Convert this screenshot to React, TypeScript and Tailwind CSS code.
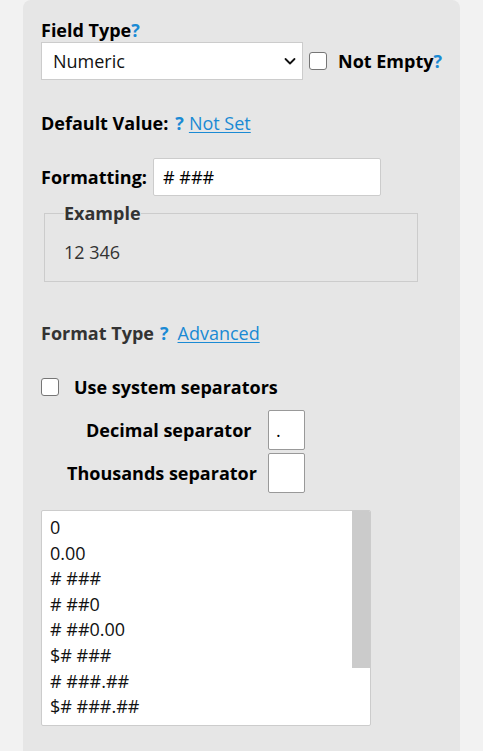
import React from "react";

function Help({ className = "" }: { className?: string }) {
  return (
    <span className={`font-bold text-[#1a8ad4] cursor-help ${className}`}>?</span>
  );
}

const formats = [
  "0",
  "0.00",
  "# ###",
  "# ##0",
  "# ##0.00",
  "$# ###",
  "# ###.##",
  "$# ###.##",
];

export default function App() {
  return (
    <div className="min-h-[751px] bg-[#f2f2f2] font-['Open_Sans',sans-serif] text-[18px] leading-[22px] text-black">
      <div className="ml-[23px] w-[437px] min-h-[751px] rounded-t-[8px] bg-[#e6e6e6] pl-[18px] pt-[19px] pb-[26px]">
        {/* field type */}
        <div className="font-bold">
          Field Type<Help />
        </div>
        <div className="mt-[1px] flex items-center">
          <div className="relative w-[262px]">
            <select
              defaultValue="Numeric"
              className="h-[38px] w-full appearance-none border border-[#ccc] bg-white pl-[11px] text-[18px] text-[#111] outline-none"
            >
              <option>Numeric</option>
              <option>Text</option>
              <option>Date</option>
            </select>
            <svg
              className="pointer-events-none absolute right-[7px] top-[13px]"
              width="12"
              height="12"
              viewBox="0 0 12 12"
              fill="none"
              stroke="#111"
              strokeWidth="1.8"
              strokeLinecap="round"
              strokeLinejoin="round"
            >
              <path d="M1.5 4 L6 8.5 L10.5 4" />
            </svg>
          </div>
          <input
            type="checkbox"
            className="ml-[6px] h-[18px] w-[18px] appearance-none rounded-[3px] border border-[#767676] bg-white"
          />
          <span className="ml-[11px] font-bold">
            Not Empty<Help />
          </span>
        </div>

        {/* default value */}
        <div className="mt-[32px] flex items-center">
          <span className="font-bold">Default Value:</span>
          <Help className="ml-[7px]" />
          <a href="#" className="ml-[5px] text-[#1a8ad4] underline underline-offset-2">
            Not Set
          </a>
        </div>

        {/* formatting */}
        <div className="mt-[24px] flex items-center">
          <span className="font-bold">Formatting:</span>
          <input
            defaultValue="# ###"
            className="ml-[6px] h-[38px] w-[228px] rounded-[2px] border border-[#ccc] bg-white px-[9px] text-[18px] text-black outline-none"
          />
        </div>

        <fieldset className="mt-[6px] ml-[3px] w-[374px] h-[80px] border border-[#ccc] px-[19px]">
          <legend className="px-0 font-bold text-[#333]">Example</legend>
          <div className="mt-[17px] text-[#333]">12 346</div>
        </fieldset>

        {/* format type */}
        <div className="mt-[40px] flex items-center text-[#333]">
          <span className="font-bold">Format Type</span>
          <Help className="ml-[6px]" />
          <a href="#" className="ml-[9px] text-[#1a8ad4] underline underline-offset-2">
            Advanced
          </a>
        </div>

        <label className="mt-[32px] flex items-center">
          <input
            type="checkbox"
            className="h-[18px] w-[18px] appearance-none rounded-[3px] border border-[#767676] bg-white"
          />
          <span className="ml-[15px] font-bold">Use system separators</span>
        </label>

        <div className="mt-[12px] flex flex-col gap-[3px]">
          <div className="flex items-center">
            <span className="ml-[45px] w-[182px] font-bold">Decimal separator</span>
            <input
              defaultValue="."
              className="h-[40px] w-[37px] rounded-[2px] border border-[#999] bg-white px-[7px] text-[18px] outline-none"
            />
          </div>
          <div className="flex items-center">
            <span className="ml-[26px] w-[201px] font-bold">Thousands separator</span>
            <input
              defaultValue=""
              className="h-[40px] w-[37px] rounded-[2px] border border-[#999] bg-white px-[7px] text-[18px] outline-none"
            />
          </div>
        </div>

        {/* preset formats, with a scroll thumb down the right side */}
        <div className="mt-[17px] flex h-[216px] w-[330px] overflow-hidden rounded-[2px] border border-[#ccc] bg-white">
          <div className="flex-1 pl-[8px] pt-[4px] leading-[25.6px] text-[#111]">
            {formats.map((f) => (
              <div key={f} className="cursor-pointer">
                {f}
              </div>
            ))}
          </div>
          <div className="w-[18px]">
            <div className="h-[157px] bg-[#cbcbcb]" />
          </div>
        </div>
      </div>
    </div>
  );
}
